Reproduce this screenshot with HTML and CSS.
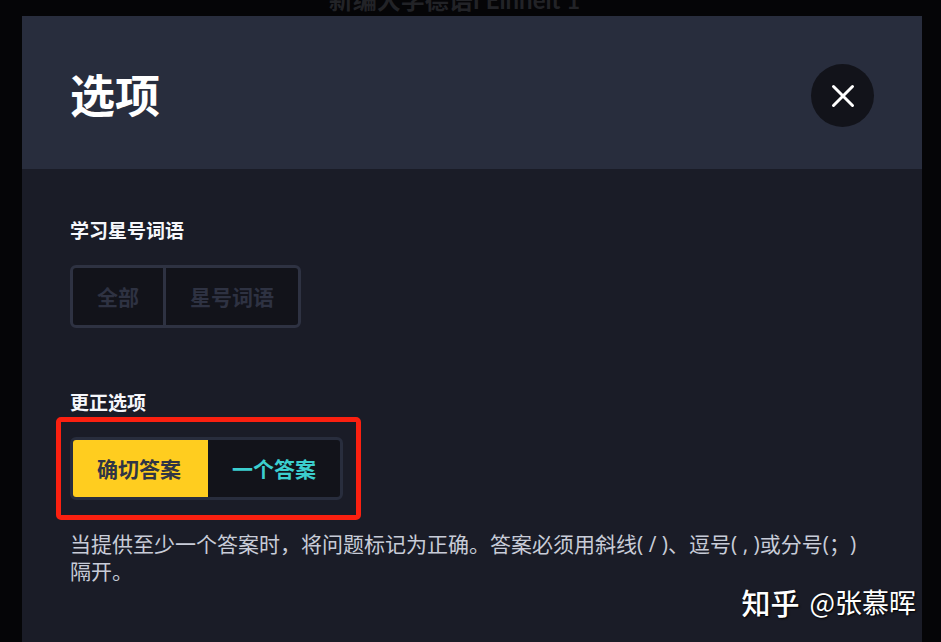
FILE: index.html
```html
<!DOCTYPE html>
<html lang="zh-CN">
<head>
    <meta charset="UTF-8">
    <meta name="viewport" content="width=device-width, initial-scale=1.0">
    <title>选项</title>
    <link rel="stylesheet" href="styles.css">
</head>
<body>
    <div class="page-header">
        <span class="page-title">新编大学德语I Einheit 1</span>
    </div>
    <div class="modal" role="dialog" aria-labelledby="modal-title">
        <div class="modal-header">
            <h1 class="modal-title" id="modal-title">选项</h1>
            <button class="close" type="button" aria-label="关闭">
                <svg class="close-icon" viewBox="0 0 24 24" aria-hidden="true">
                    <path d="M2.5 2.5L21.5 21.5M21.5 2.5L2.5 21.5"/>
                </svg>
            </button>
        </div>
        <div class="modal-body">
            <section class="option">
                <h2 class="option-label" id="star-label">学习星号词语</h2>
                <div class="segment disabled" role="group" aria-labelledby="star-label">
                    <button class="segment-button" type="button" disabled>全部</button>
                    <button class="segment-button" type="button" disabled>星号词语</button>
                </div>
            </section>
            <section class="option">
                <h2 class="option-label" id="answer-label">更正选项</h2>
                <div class="segment marked" role="group" aria-labelledby="answer-label">
                    <button class="segment-button active" type="button" aria-pressed="true">确切答案</button>
                    <button class="segment-button" type="button" aria-pressed="false">一个答案</button>
                </div>
                <p class="option-text">当提供至少一个答案时，将问题标记为正确。答案必须用斜线( / )、逗号( , )或分号(；)隔开。</p>
            </section>
        </div>
    </div>
    <div class="watermark">
        <span class="watermark-logo">知乎</span>
        <span>@张慕晖</span>
    </div>
</body>
</html>
```
FILE: styles.css
```css
* {
    margin: 0;
    padding: 0;
    box-sizing: border-box;
}

body {
    display: flex;
    flex-direction: column;
    height: 100vh;
    overflow: hidden;
    background-color: #050507;
    color: #f6f7fb;
    font-family: "Open Sans", "Noto Sans CJK SC", sans-serif;
}

button {
    font-family: inherit;
    cursor: pointer;
}

.page-header {
    display: flex;
    flex-shrink: 0;
    justify-content: center;
    align-items: flex-end;
    height: 16px;
    padding: 0 32px 4px 0;
    overflow: hidden;
}

.page-title {
    font-family: "Lato", "Noto Sans CJK SC", sans-serif;
    font-size: 24px;
    font-weight: 700;
    line-height: 24px;
    color: #222327;
    white-space: nowrap;
}

.modal {
    display: flex;
    flex: 1 0 auto;
    flex-direction: column;
    margin: 0 19px 0 22px;
    background-color: #1a1c27;
}

.modal-header {
    display: flex;
    justify-content: space-between;
    align-items: center;
    padding: 48px 48px 42px;
    background-color: #282d3d;
}

.modal-title {
    font-size: 45px;
    font-weight: 700;
    line-height: 63px;
    color: #fff;
}

.close {
    display: flex;
    justify-content: center;
    align-items: center;
    width: 63px;
    height: 63px;
    border: none;
    border-radius: 50%;
    background-color: #12131a;
}

.close-icon {
    width: 24px;
    height: 24px;
    fill: none;
    stroke: #fff;
    stroke-width: 3;
    stroke-linecap: round;
}

.modal-body {
    display: flex;
    flex-direction: column;
    gap: 61px;
    padding: 48px;
}

.option {
    display: flex;
    flex-direction: column;
    align-items: flex-start;
}

.option-label {
    margin-bottom: 20px;
    font-size: 19px;
    font-weight: 700;
    line-height: 28px;
}

.segment {
    position: relative;
    display: flex;
    border: 3px solid #282d3d;
    border-radius: 6px;
    background-color: #12131a;
}

.segment-button {
    height: 57px;
    padding: 0 24px 2px;
    border: none;
    background-color: transparent;
    color: #3ccfcf;
    font-size: 21px;
    font-weight: 700;
}

.segment-button:first-child {
    border-right: 3px solid #2e3242;
    border-radius: 3px 0 0 3px;
}

.segment-button.active {
    border-color: #ffcd1f;
    background-color: #ffcd1f;
    color: #303545;
}

.disabled {
    border-color: #2e3242;
}

.disabled .segment-button {
    color: #2e3242;
    cursor: default;
}

/* red frame around the group */
.marked::after {
    content: "";
    position: absolute;
    top: -23px;
    right: -21px;
    bottom: -23px;
    left: -17px;
    border: 5px solid #fb2010;
    border-radius: 5px;
    pointer-events: none;
}

.option-text {
    margin-top: 31px;
    font-size: 21px;
    line-height: 27px;
    color: #c8ccd8;
    text-spacing-trim: space-all;
}

.watermark {
    position: absolute;
    right: 25px;
    bottom: 25px;
    display: flex;
    align-items: center;
    gap: 10px;
    color: #fff;
    font-family: "Noto Sans CJK SC", sans-serif;
    font-size: 27px;
    line-height: 30px;
    text-shadow: 1px 1px 2px #000;
}

.watermark-logo {
    font-size: 29px;
    font-weight: 500;
}
```
